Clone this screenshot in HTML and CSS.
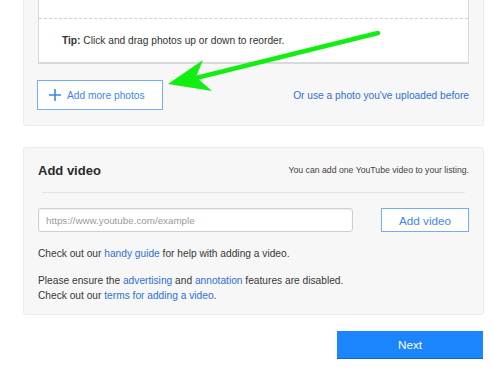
FILE: index.html
```html
<!DOCTYPE html>
<html lang="en">

<head>
    <meta charset="utf-8"/>
    <meta name="viewport" content="width=device-width, initial-scale=1.0">
    <title>Photos and video</title>
    <link rel="stylesheet" href="styles.css">
</head>
<body>
    <div class="page">
        <div class="panel photos-panel">
            <div class="photo-box">
                <div class="photo-list"></div>
                <div class="photo-tip"><b>Tip:</b> Click and drag photos up or down to reorder.</div>
            </div>
            <div class="photo-actions">
                <button type="button" class="btn-outline btn-add-photos">
                    <svg class="plus-icon" viewBox="0 0 12 12"><path d="M6 0v12M0 6h12"></path></svg>
                    Add more photos
                </button>
                <a href="#" class="link">Or use a photo you've uploaded before</a>
            </div>
        </div>

        <div class="panel video-panel">
            <div class="panel-header">
                <h2>Add video</h2>
                <span class="hint">You can add one YouTube video to your listing.</span>
            </div>
            <hr class="divider"/>
            <div class="video-row">
                <input type="text" class="video-input" placeholder="https://www.youtube.com/example"/>
                <button type="button" class="btn-outline btn-add-video">Add video</button>
            </div>
            <p class="help first">Check out our <a href="#" class="link">handy guide</a> for help with adding a video.</p>
            <p class="help">Please ensure the <a href="#" class="link">advertising</a> and <a href="#" class="link">annotation</a> features are disabled.<br/>
                Check out our <a href="#" class="link">terms for adding a video</a>.</p>
        </div>

        <div class="footer">
            <button type="button" class="btn-next">Next</button>
        </div>
    </div>

    <svg class="arrow" viewBox="0 0 491 371">
        <line x1="378" y1="33" x2="196" y2="78"></line>
        <polygon points="168,84 203,60 196,77 212,91"></polygon>
    </svg>
</body>
</html>
```

FILE: styles.css
```css
body {
    font-family: "Liberation Sans", Arial, sans-serif;
    margin: 0;
    padding: 0;
    background-color: #fff;
    color: #383838;
    font-size: 10.2px;
    overflow: hidden;
}
.page {
    padding: 0 7px 0 23px;
}
.panel {
    background: #f7f7f7;
    border: 1px solid #ebebeb;
    border-radius: 3px;
    padding: 15px 14px;
}
.photos-panel {
    margin-top: -58px;
}
.photo-box {
    background: #fff;
    border: 1px solid #d9d9d9;
    border-bottom-width: 2px;
}
.photo-list {
    height: 59px;
    border-bottom: 1px dashed #d0d0d0;
}
.photo-tip {
    height: 43px;
    line-height: 43px;
    padding-left: 23px;
    color: #333;
}
.photo-actions {
    display: flex;
    justify-content: space-between;
    align-items: center;
    margin-top: 16px;
}
.link {
    color: #2f70d6;
    text-decoration: none;
}
.btn-outline {
    font-family: inherit;
    background: #fff;
    border: 1px solid #74acf6;
    color: #3f85ee;
    cursor: pointer;
    padding: 0;
}
.btn-add-photos {
    display: flex;
    align-items: center;
    gap: 6px;
    width: 126px;
    height: 30px;
    padding-left: 11px;
    margin-left: -1px;
    font-size: 10.2px;
}
.plus-icon {
    width: 12px;
    height: 12px;
    stroke: #3f85ee;
    stroke-width: 1.6;
    fill: none;
}
.video-panel {
    margin-top: 21px;
    padding-top: 12px;
    padding-bottom: 11px;
}
.panel-header {
    display: flex;
    justify-content: space-between;
    align-items: center;
    height: 20px;
}
.panel-header h2 {
    margin: 0;
    font-size: 13px;
    color: #2b2b2b;
}
.hint {
    font-size: 8.7px;
    color: #444;
}
.divider {
    border: none;
    border-top: 1px solid #e4e4e4;
    margin: 12px 4px 0;
}
.video-row {
    display: flex;
    gap: 28px;
    margin-top: 15px;
}
.video-input {
    flex: 1;
    height: 24px;
    box-sizing: border-box;
    border: 1px solid #cfcfcf;
    border-radius: 3px;
    box-shadow: inset 0 1px 2px rgba(0,0,0,0.08);
    padding: 0 7px;
    font-family: inherit;
    font-size: 9.8px;
    background: #fff;
}
.video-input::placeholder {
    color: #9a9a9a;
}
.btn-add-video {
    width: 88px;
    height: 24px;
    font-size: 11.7px;
}
.help {
    margin: 12px 0 0;
    line-height: 15px;
}
.help.first {
    margin-top: 14px;
}
.footer {
    display: flex;
    justify-content: flex-end;
    margin-top: 16px;
    padding-right: 1px;
}
.btn-next {
    width: 146px;
    height: 28px;
    background: #1a85ff;
    border: none;
    border-bottom: 1px solid #1166cc;
    color: #fff;
    font-family: inherit;
    font-size: 11.7px;
    cursor: pointer;
}
.arrow {
    position: absolute;
    top: 0;
    left: 0;
    width: 491px;
    height: 371px;
    pointer-events: none;
}
.arrow line {
    stroke: #12ee12;
    stroke-width: 4.5;
    stroke-linecap: round;
}
.arrow polygon {
    fill: #12ee12;
}
```
